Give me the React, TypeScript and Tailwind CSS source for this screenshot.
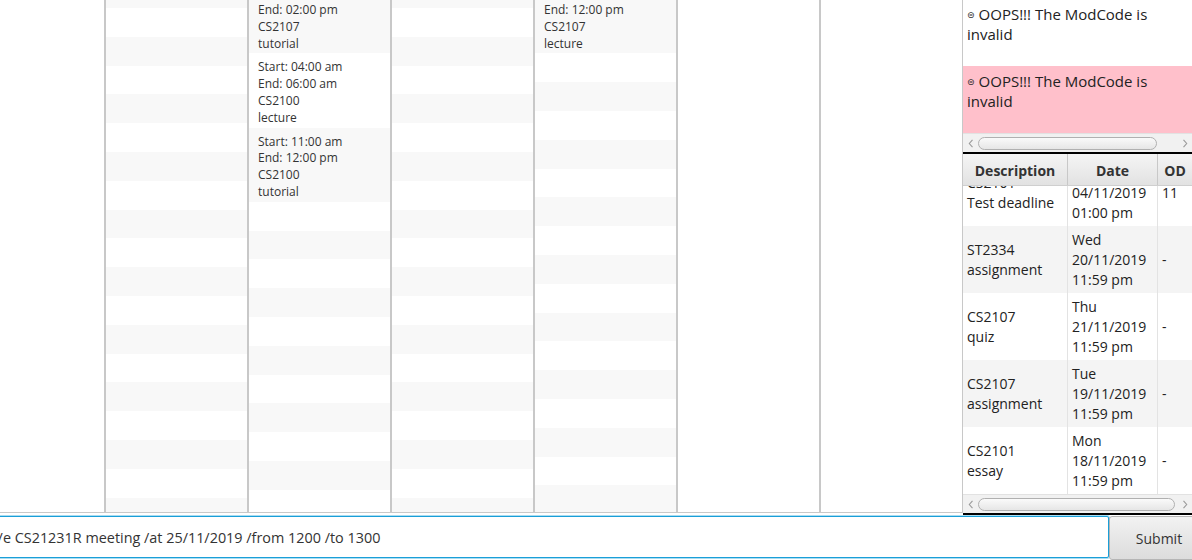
import React from "react";

interface Slot {
    start: string;
    end: string;
    mod: string;
    kind: string;
}

interface DeadlineRow {
    desc: string[];
    date: string[];
    od: string;
}

const days: { slots: Slot[]; striped: boolean }[] = [
    { slots: [], striped: false },
    { slots: [], striped: true },
    {
        slots: [
            { start: "12:00 pm", end: "02:00 pm", mod: "CS2107", kind: "tutorial" },
            { start: "04:00 am", end: "06:00 am", mod: "CS2100", kind: "lecture" },
            { start: "11:00 am", end: "12:00 pm", mod: "CS2100", kind: "tutorial" },
        ],
        striped: true,
    },
    { slots: [], striped: true },
    {
        slots: [{ start: "10:00 am", end: "12:00 pm", mod: "CS2107", kind: "lecture" }],
        striped: true,
    },
    { slots: [], striped: false },
    { slots: [], striped: false },
];

const deadlines: DeadlineRow[] = [
    { desc: ["CS2101", "Test deadline"], date: ["Mon", "04/11/2019", "01:00 pm"], od: "11" },
    { desc: ["ST2334", "assignment"], date: ["Wed", "20/11/2019", "11:59 pm"], od: "-" },
    { desc: ["CS2107", "quiz"], date: ["Thu", "21/11/2019", "11:59 pm"], od: "-" },
    { desc: ["CS2107", "assignment"], date: ["Tue", "19/11/2019", "11:59 pm"], od: "-" },
    { desc: ["CS2101", "essay"], date: ["Mon", "18/11/2019", "11:59 pm"], od: "-" },
];

const Chevron: React.FC<{ left?: boolean }> = ({ left }) => (
    <svg width="6" height="9" viewBox="0 0 6 9">
        <path
            d={left ? "M4.5 0.8 L1.3 4.5 L4.5 8.2" : "M1.5 0.8 L4.7 4.5 L1.5 8.2"}
            fill="none"
            stroke="#9a9a9a"
            strokeWidth="1.1"
        />
    </svg>
);

const HScroll: React.FC<{ thumbClass: string }> = ({ thumbClass }) => (
    <div className="h-[19px] shrink-0 bg-[#f1f1f1] border-t border-[#e2e2e2] flex items-center">
        <div className="w-[15px] flex justify-center">
            <Chevron left />
        </div>
        <div
            className={`${thumbClass} h-[13px] rounded-full border border-[#b0b0b0] bg-gradient-to-b from-[#fafafa] to-[#e6e6e6]`}
        />
        <div className="flex-1" />
        <div className="w-[15px] flex justify-center">
            <Chevron />
        </div>
    </div>
);

const DayColumn: React.FC<{ slots: Slot[]; striped: boolean }> = ({ slots, striped }) => {
    const filler = striped ? Array.from({ length: 20 - slots.length }) : [];

    return (
        <div className="w-[143px] h-[513px] shrink-0 border-x border-b border-[#c8c8c8] overflow-hidden bg-white">
            <div className="-mt-[20.8px] flex flex-col">
                {slots.map((s, i) => (
                    <div
                        key={i}
                        className={`${i % 2 === 0 ? "bg-[#f8f8f8]" : "bg-white"} pl-[9px] pt-[6px] pb-[1px] text-[12px] leading-[16.8px] text-[#333]`}
                    >
                        <div>Start: {s.start}</div>
                        <div>End: {s.end}</div>
                        <div>{s.mod}</div>
                        <div>{s.kind}</div>
                    </div>
                ))}
                {filler.map((_, j) => {
                    const i = j + slots.length;
                    return (
                        <div
                            key={`f${i}`}
                            className={`h-[28.8px] shrink-0 ${i % 2 === 0 ? "bg-[#f8f8f8]" : "bg-white"}`}
                        />
                    );
                })}
            </div>
        </div>
    );
};

const Message: React.FC<{ pink?: boolean }> = ({ pink }) => (
    <div
        className={`h-[67px] pl-[4px] pt-[6px] text-[15px] text-[#222] ${pink ? "bg-[#ffc0cb]" : "bg-white"}`}
    >
        <div className="h-[19.5px] leading-[19.5px] flex items-center">
            <span className="text-[9px] leading-none mr-[4px] mt-[1px] font-['DejaVu_Sans',sans-serif]">⊜</span>
            <span>OOPS!!! The ModCode is</span>
        </div>
        <div className="h-[19.5px] leading-[19.5px]">invalid</div>
    </div>
);

const DeadlineTable: React.FC = () => (
    <div className="flex-1 flex flex-col min-h-0">
        <div className="h-[32px] shrink-0 flex bg-gradient-to-b from-[#f5f5f5] to-[#e2e2e2] border-b border-[#cfcfcf] text-[14px] font-bold text-[#333]">
            <div className="w-[105px] border-r border-[#c8c8c8] flex items-center justify-center pt-px">Description</div>
            <div className="w-[90px] border-r border-[#c8c8c8] flex items-center justify-center pt-px">Date</div>
            <div className="flex-1 flex items-center justify-center pt-px">OD</div>
        </div>
        <div className="flex-1 overflow-hidden">
            <div className="-mt-[27px]">
                {deadlines.map((row, i) => (
                    <div
                        key={i}
                        className={`h-[67px] flex text-[14px] leading-[20px] text-[#222] ${i % 2 === 1 ? "bg-[#f4f4f4]" : "bg-white"}`}
                    >
                        <div className="w-[105px] border-r border-[#e3e3e3] pl-[4px] flex flex-col justify-center">
                            {row.desc.map((d) => (
                                <div key={d}>{d}</div>
                            ))}
                        </div>
                        <div className="w-[90px] border-r border-[#e3e3e3] pl-[4px] flex flex-col justify-center">
                            {row.date.map((d) => (
                                <div key={d}>{d}</div>
                            ))}
                        </div>
                        <div className="flex-1 pl-[4px] flex items-center">{row.od}</div>
                    </div>
                ))}
            </div>
        </div>
        <HScroll thumbClass="w-[197px]" />
    </div>
);

export default function App() {
    return (
        <div className="w-[1192px] h-[560px] overflow-hidden bg-white font-['Open_Sans',sans-serif] text-[#333]">
            <div className="flex h-[515px]">
                <div className="flex -ml-[38px] shrink-0">
                    {days.map((d, i) => (
                        <DayColumn key={i} slots={d.slots} striped={d.striped} />
                    ))}
                </div>
                <div className="w-[229px] h-[515px] shrink-0 flex flex-col border-b-2 border-black">
                    <div className="h-[152px] shrink-0 flex flex-col">
                        <div className="flex-1 overflow-hidden">
                            <div className="-mt-px">
                                <Message />
                                <Message pink />
                            </div>
                        </div>
                        <HScroll thumbClass="w-[179px]" />
                    </div>
                    <div className="h-[2px] shrink-0 bg-black" />
                    <DeadlineTable />
                </div>
            </div>
            <div className="h-[45px] w-[1212px] -ml-[2px] pt-px flex">
                <div className="w-[1111px] h-[42px] shrink-0 border border-[#1a9fd8] shadow-[0_0_0_1px_#a9dcf1] rounded-[2px] bg-white flex items-center overflow-hidden pt-[2px]">
                    <span className="-ml-[27px] whitespace-nowrap text-[14.4px] text-[#333]">
                        add/e CS21231R meeting /at 25/11/2019 /from 1200 /to 1300
                    </span>
                </div>
                <button className="w-[100px] h-[44px] shrink-0 border border-[#b5b5b5] rounded-[3px] bg-gradient-to-b from-[#f2f2f2] to-[#dcdcdc] text-[14px] text-[#333] flex items-center justify-center">
                    Submit
                </button>
            </div>
        </div>
    );
}
